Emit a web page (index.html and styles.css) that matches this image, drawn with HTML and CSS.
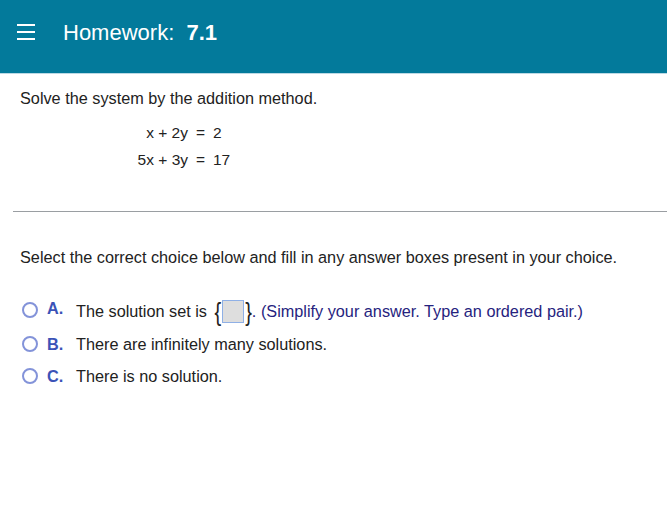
FILE: index.html
```html
<!DOCTYPE html>
<html>
<head>
<meta charset="utf-8">
<link rel="stylesheet" href="styles.css">
</head>
<body>
<header class="topbar">
  <svg class="menu" width="20" height="18" viewBox="0 0 20 18"><rect x="1" y="1" width="18" height="2" fill="#fff"/><rect x="1" y="8" width="18" height="2" fill="#fff"/><rect x="1" y="15" width="18" height="2" fill="#fff"/></svg>
  <h1 class="title">Homework:&nbsp; <b>7.1</b></h1>
</header>
<main class="content">
  <p class="prompt">Solve the system by the addition method.</p>
  <div class="system">
    <span class="lhs">x + 2y</span><span class="eq">=</span><span class="rhs">2</span>
    <span class="lhs">5x + 3y</span><span class="eq">=</span><span class="rhs">17</span>
  </div>
  <hr class="divider">
  <p class="instr">Select the correct choice below and fill in any answer boxes present in your choice.</p>
  <ul class="choices">
    <li class="choice"><span class="radio"></span><span class="letter">A.</span><span class="ctext">The solution set is <span class="brace">{</span><span class="box"></span><span class="brace">}</span><span class="hint">. (Simplify your answer. Type an ordered pair.)</span></span></li>
    <li class="choice"><span class="radio"></span><span class="letter">B.</span><span class="ctext">There are infinitely many solutions.</span></li>
    <li class="choice"><span class="radio"></span><span class="letter">C.</span><span class="ctext">There is no solution.</span></li>
  </ul>
</main>
</body>
</html>
```
FILE: styles.css
```css
* { box-sizing: border-box; }
body {
  margin: 0;
  font-family: "Liberation Sans", Arial, sans-serif;
  color: #222;
  background: #fff;
}
.topbar {
  height: 74px;
  background: #037a9b;
  border-bottom: 1px solid #bcd9e4;
  display: flex;
  align-items: flex-start;
  padding: 22px 0 0 16px;
}
.menu { margin-top: 1px; }
.title {
  margin: 0 0 0 27px;
  font-size: 22px;
  font-weight: normal;
  color: #fff;
  line-height: 22px;
}
.title b { font-weight: bold; }
.prompt {
  margin: 15px 0 0 20px;
  font-size: 16.25px;
  line-height: 18px;
}
.system {
  display: grid;
  grid-template-columns: 188px 25px auto;
  row-gap: 9px;
  margin-top: 17px;
  font-size: 15.5px;
  line-height: 18px;
  width: 260px;
}
.lhs { text-align: right; }
.eq { text-align: center; }
.divider {
  border: 0;
  border-top: 1px solid #9a9ea2;
  margin: 42px 0 0 13px;
}
.instr {
  margin: 36px 0 0 20px;
  font-size: 16.25px;
  line-height: 18px;
}
.choices {
  list-style: none;
  margin: 31px 0 0 22px;
  padding: 0;
  font-size: 16.25px;
}
.choice {
  display: flex;
  align-items: center;
  height: 24px;
  margin-bottom: 8px;
}
.choice:first-child { height: 26px; margin-bottom: 9px; }
.radio {
  width: 16px;
  height: 16px;
  border: 2px solid #8393d9;
  border-radius: 50%;
  flex: none;
}
.letter {
  margin-left: 9px;
  width: 29px;
  font-weight: bold;
  color: #3b53b7;
}
.choice:first-child .letter { align-self: flex-start; margin-top: 2px; }
.choice:first-child .ctext { margin-top: 3px; }
.ctext { display: flex; align-items: center; white-space: pre; }
.brace {
  font-size: 20px;
  line-height: 22px;
  margin: 0 1px 0 3px;
  color: #222;
  transform: scaleY(1.25);
}
.brace + .box + .brace { margin: 0 0 0 1px; }
.box {
  display: inline-block;
  width: 22px;
  height: 23px;
  background: #dedede;
  border: 1px solid #8fb0e6;
}
.hint { color: #26237e; }
```
